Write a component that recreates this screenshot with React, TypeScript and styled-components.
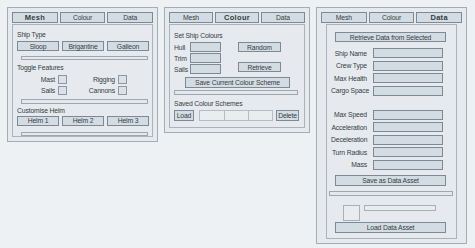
import React from "react";
import styled, { createGlobalStyle } from "styled-components";

const Global = createGlobalStyle`
  * { box-sizing: border-box; }
  html, body { margin: 0; padding: 0; background: #eef1f4; }
  body {
    font-family: "Liberation Sans Narrow", "Liberation Sans", Arial, sans-serif;
    font-size: 6.8px;
    letter-spacing: -0.15px;
    color: #353c43;
  }
`;

const Page = styled.div`
  display: flex;
  align-items: flex-start;
  gap: 6px;
  padding: 7px;
  width: 475px;
  height: 248px;
`;

const Panel = styled.div<{ $w: number }>`
  width: ${(p) => p.$w}px;
  background: #e6eaee;
  border: 1px solid #a3adb6;
  padding: 4px;
  display: flex;
  flex-direction: column;
  gap: 1px;
`;

const Tabs = styled.div`
  display: grid;
  grid-template-columns: 1fr 1fr 1fr;
  gap: 2px;
`;

const Tab = styled.div<{ $active?: boolean }>`
  height: 11px;
  background: #d4dce3;
  border: 1px solid #7d8a96;
  display: flex;
  align-items: center;
  justify-content: center;
  font-weight: ${(p) => (p.$active ? 700 : 400)};
  font-size: ${(p) => (p.$active ? "7.5px" : "6.8px")};
  letter-spacing: ${(p) => (p.$active ? "0.3px" : "-0.15px")};
`;

const Inner = styled.div<{ $mx?: number; $h: number }>`
  margin: 0 ${(p) => p.$mx ?? 0}px;
  height: ${(p) => p.$h}px;
  border: 1px solid #aab3bb;
  padding: 4px 3px 0 4px;
  display: flex;
  flex-direction: column;
`;

const Label = styled.div<{ $mt?: number }>`
  margin-top: ${(p) => p.$mt ?? 0}px;
  height: 9px;
  line-height: 9px;
  white-space: nowrap;
`;

const Btn = styled.div<{ $w?: number; $h?: number }>`
  width: ${(p) => (p.$w ? `${p.$w}px` : "auto")};
  height: ${(p) => p.$h ?? 10}px;
  background: #d4dce3;
  border: 1px solid #7d8a96;
  display: flex;
  align-items: center;
  justify-content: center;
  white-space: nowrap;
`;

const BtnRow = styled.div<{ $mt?: number }>`
  margin-top: ${(p) => p.$mt ?? 0}px;
  display: grid;
  grid-template-columns: 1fr 1fr 1fr;
  gap: 3px;
`;

const Slider = styled.div<{ $mt?: number; $ml?: number; $mr?: number }>`
  margin: ${(p) => p.$mt ?? 0}px ${(p) => p.$mr ?? 0}px 0 ${(p) => p.$ml ?? 0}px;
  height: 5px;
  background: #e4e8ec;
  border: 1px solid #9da7b0;
`;

const ToggleGrid = styled.div`
  margin-top: 3px;
  display: grid;
  grid-template-columns: 38px 9px 45px 9px;
  grid-auto-rows: 9px;
  column-gap: 3px;
  row-gap: 2px;
  align-items: center;
`;

const RightLabel = styled.div`
  text-align: right;
  white-space: nowrap;
  line-height: 9px;
`;

const LeftLabel = styled.div`
  white-space: nowrap;
  line-height: 9px;
`;

const Check = styled.div`
  width: 9px;
  height: 9px;
  background: #dbe1e6;
  border: 1px solid #8c98a3;
`;

const ColourGrid = styled.div`
  margin-top: 2px;
  display: grid;
  grid-template-columns: 15px 31px 15px 43px;
  grid-template-rows: 10px 10px 10px;
  column-gap: 1px;
  row-gap: 1px;
  align-items: center;
`;

const Field = styled.div<{ $w?: number; $h?: number }>`
  width: ${(p) => (p.$w ? `${p.$w}px` : "100%")};
  height: ${(p) => p.$h ?? 10}px;
  background: #d4dce3;
  border: 1px solid #7d8a96;
`;

const SaveRow = styled.div<{ $mt?: number }>`
  margin-top: ${(p) => p.$mt ?? 0}px;
  display: flex;
  justify-content: center;
`;

const SchemeRow = styled.div`
  margin-top: 2px;
  display: flex;
  align-items: center;
  gap: 5px;
`;

const Slots = styled.div`
  display: flex;
  height: 11px;
  border: 1px solid #b4bcc4;
  background: #e9edf0;
`;

const Slot = styled.div`
  width: 24px;
  & + & { border-left: 1px solid #b4bcc4; }
`;

const DataGrid = styled.div<{ $mt?: number }>`
  margin-top: ${(p) => p.$mt ?? 0}px;
  display: grid;
  grid-template-columns: 36px 70px;
  grid-auto-rows: 10px;
  column-gap: 6px;
  row-gap: 2.5px;
  align-items: center;
`;

const AssetRow = styled.div`
  margin-top: 9px;
  display: flex;
  align-items: flex-start;
  gap: 4px;
  padding-left: 12px;
`;

const Thumb = styled.div`
  width: 17px;
  height: 16px;
  border: 1px solid #a8b1ba;
  background: #e8ecef;
`;

const Bar = styled.div`
  width: 72px;
  height: 6px;
  border: 1px solid #a8b1ba;
  background: #e8ecef;
`;

const Center = styled.div<{ $mt?: number }>`
  margin-top: ${(p) => p.$mt ?? 0}px;
  padding-left: 4px;
`;

const RetrieveBtn = styled(Btn)`
  align-self: start;
  margin-top: -2px;
`;

const DeleteBtn = styled(Btn)`
  margin-left: -2px;
`;

function TabBar({ active }: { active: number }) {
  return (
    <Tabs>
      {["Mesh", "Colour", "Data"].map((t, i) => (
        <Tab key={t} $active={i === active}>
          {t}
        </Tab>
      ))}
    </Tabs>
  );
}

function MeshPanel() {
  return (
    <Panel $w={151}>
      <TabBar active={0} />
      <Inner $h={113}>
        <Label $mt={1}>Ship Type</Label>
        <BtnRow $mt={2}>
          <Btn>Sloop</Btn>
          <Btn>Brigantine</Btn>
          <Btn>Galleon</Btn>
        </BtnRow>
        <Slider $mt={5} $ml={4} $mr={1} />
        <Label $mt={3}>Toggle Features</Label>
        <ToggleGrid>
          <RightLabel>Mast</RightLabel>
          <Check />
          <RightLabel>Rigging</RightLabel>
          <Check />
          <RightLabel>Sails</RightLabel>
          <Check />
          <RightLabel>Cannons</RightLabel>
          <Check />
        </ToggleGrid>
        <Slider $mt={4} $ml={4} $mr={1} />
        <Label $mt={2}>Customise Helm</Label>
        <BtnRow $mt={1}>
          <Btn>Helm 1</Btn>
          <Btn>Helm 2</Btn>
          <Btn>Helm 3</Btn>
        </BtnRow>
        <Slider $mt={6} $ml={4} $mr={1} />
      </Inner>
    </Panel>
  );
}

function ColourPanel() {
  return (
    <Panel $w={146}>
      <TabBar active={1} />
      <Inner $h={104}>
        <Label $mt={2}>Set Ship Colours</Label>
        <ColourGrid>
          <LeftLabel>Hull</LeftLabel>
          <Field $w={31} />
          <span />
          <Btn $w={43}>Random</Btn>
          <LeftLabel>Trim</LeftLabel>
          <Field $w={31} />
          <span />
          <span />
          <LeftLabel>Sails</LeftLabel>
          <Field $w={31} />
          <span />
          <RetrieveBtn $w={43}>Retrieve</RetrieveBtn>
        </ColourGrid>
        <SaveRow $mt={3}>
          <Btn $w={105} $h={11}>Save Current Colour Scheme</Btn>
        </SaveRow>
        <Slider $mt={2} $ml={0} $mr={3} />
        <Label $mt={4}>Saved Colour Schemes</Label>
        <SchemeRow>
          <Btn $w={20} $h={11}>Load</Btn>
          <Slots>
            <Slot />
            <Slot />
            <Slot />
          </Slots>
          <DeleteBtn $w={23} $h={11}>Delete</DeleteBtn>
        </SchemeRow>
      </Inner>
    </Panel>
  );
}

function DataPanel() {
  return (
    <Panel $w={151}>
      <TabBar active={2} />
      <Inner $mx={5} $h={215}>
        <Center $mt={3}>
          <Btn $w={111}>Retrieve Data from Selected</Btn>
        </Center>
        <DataGrid $mt={6}>
          <RightLabel>Ship Name</RightLabel>
          <Field />
          <RightLabel>Crew Type</RightLabel>
          <Field />
          <RightLabel>Max Health</RightLabel>
          <Field />
          <RightLabel>Cargo Space</RightLabel>
          <Field />
        </DataGrid>
        <DataGrid $mt={14}>
          <RightLabel>Max Speed</RightLabel>
          <Field />
          <RightLabel>Acceleration</RightLabel>
          <Field />
          <RightLabel>Deceleration</RightLabel>
          <Field />
          <RightLabel>Turn Radius</RightLabel>
          <Field />
          <RightLabel>Mass</RightLabel>
          <Field />
        </DataGrid>
        <Center $mt={5}>
          <Btn $w={111} $h={11}>Save as Data Asset</Btn>
        </Center>
        <Slider $mt={5} $ml={-2} />
        <AssetRow>
          <Thumb />
          <Bar />
        </AssetRow>
        <Center $mt={1}>
          <Btn $w={111} $h={11}>Load Data Asset</Btn>
        </Center>
      </Inner>
    </Panel>
  );
}

export default function App() {
  return (
    <>
      <Global />
      <Page>
        <MeshPanel />
        <ColourPanel />
        <DataPanel />
      </Page>
    </>
  );
}
